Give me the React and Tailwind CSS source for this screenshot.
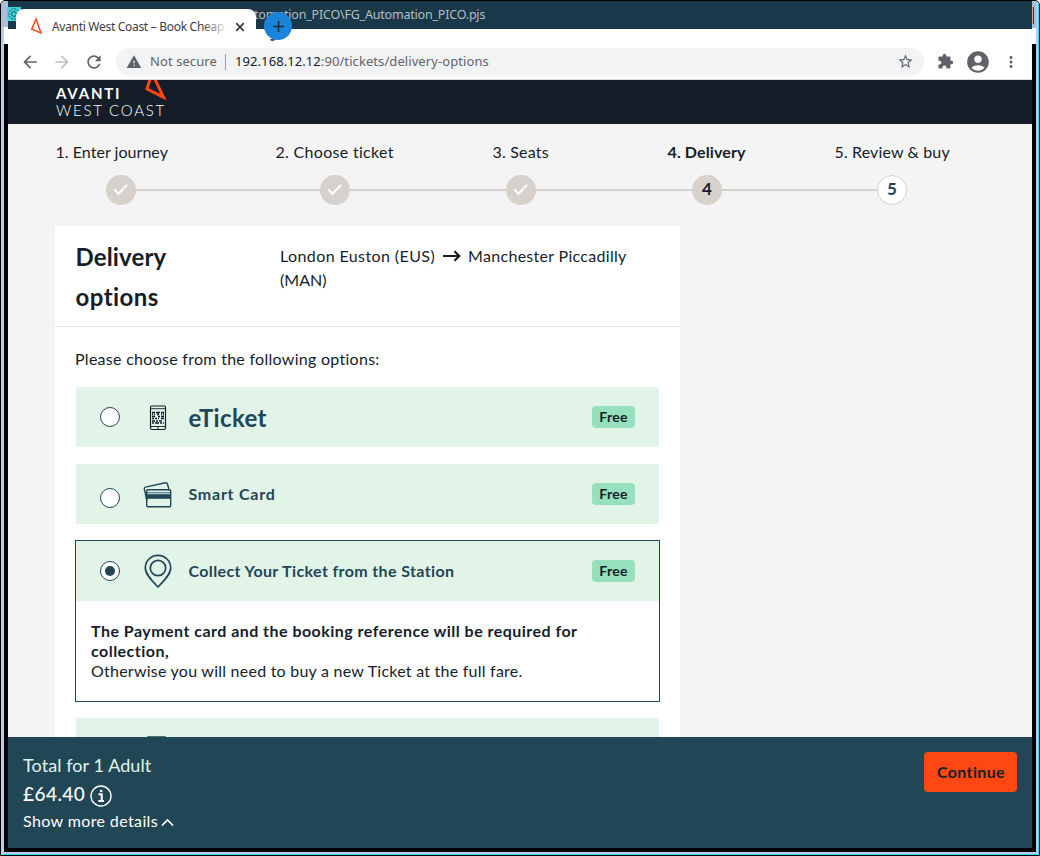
import React from "react";
import { MdArrowBack, MdArrowForward, MdRefresh, MdWarning, MdStarBorder, MdExtension, MdAccountCircle, MdMoreVert, MdAdd } from "react-icons/md";

const ui = "font-['Noto_Sans',sans-serif]";

function TitleBar() {
  return (
    <div className={`relative h-[43px] shrink-0 bg-white ${ui}`}>
      <div className="flex h-[28px] items-center bg-[#193849] pl-[246px] text-[12.5px] leading-none text-[#b4bfc6]">
        <span className="whitespace-nowrap tracking-[-0.2px]">tomation_PICO\FG_Automation_PICO.pjs</span>
      </div>
      <svg className="absolute left-[-1px] top-[6px]" width="14" height="15" viewBox="0 0 14 15" fill="none">
        <rect width="14" height="14" fill="#3cd5dc" />
        <circle cx="7" cy="7" r="5.2" stroke="#17535f" strokeDasharray="2 1" />
        <circle cx="7" cy="7" r="2.4" stroke="#17535f" />
      </svg>
      <div className="absolute left-[8px] top-[8px] flex h-[35px] w-[240px] items-center rounded-t-[8px] bg-white pl-[13px] pr-[11px]">
        <svg className="mt-[-2px] shrink-0" width="16" height="18" viewBox="0 0 16 18" fill="none" stroke="#ff4713" strokeWidth="1.5">
          <path d="M7 2L2.7 12.2L12 16Z" />
        </svg>
        <div className="relative ml-[7px] whitespace-nowrap text-[12px] leading-[18px] tracking-[-0.3px] text-[#3c4043]">
          Avanti West Coast – Book Cheap
          <div className="absolute inset-y-0 right-0 w-[22px] bg-linear-to-r from-transparent to-white/80" />
        </div>
        <svg className="ml-auto shrink-0" width="10" height="10" viewBox="0 0 10 10" stroke="#3c4043" strokeWidth="1.8">
          <path d="M1.2 1.2L8.8 8.8M8.8 1.2L1.2 8.8" />
        </svg>
      </div>
      <div className="absolute left-[256px] top-[11px] flex h-[28px] w-[28px] items-center justify-center rounded-full bg-[#1a83da] text-[#1d2c38]">
        <MdAdd className="h-[19px] w-[19px]" />
      </div>
      <div className="absolute left-[262px] top-[38px] h-[2px] w-[5px] rounded-b-full bg-[#44576a]" />
    </div>
  );
}

function Toolbar() {
  return (
    <div className={`flex h-[36px] shrink-0 items-center border-b border-[#dadce0] bg-white text-[#5f6368] ${ui}`}>
      <MdArrowBack className="ml-[12px] h-[20px] w-[20px]" />
      <MdArrowForward className="ml-[12px] h-[20px] w-[20px] text-[#bdc1c6]" />
      <MdRefresh className="ml-[12px] h-[20px] w-[20px]" />
      <div className="ml-[12px] flex h-[28px] w-[808px] items-center rounded-full bg-[#f1f3f4] pl-[10px] pr-[10px] text-[13px]">
        <MdWarning className="h-[16px] w-[16px]" />
        <span className="ml-[8px] w-[68px] whitespace-nowrap tracking-[0.08px]">Not secure</span>
        <span className="ml-[7px] h-[16px] w-px bg-[#9aa0a6]" />
        <span className="ml-[9px] whitespace-nowrap tracking-[0.08px]"><span className="text-[#202124]">192.168.12.12</span>:90/tickets/delivery-options</span>
        <MdStarBorder className="ml-auto h-[17px] w-[17px]" />
      </div>
      <MdExtension className="ml-[13px] h-[17px] w-[17px]" />
      <MdAccountCircle className="ml-[11px] h-[26px] w-[26px]" />
      <MdMoreVert className="ml-[11px] h-[18px] w-[18px]" />
    </div>
  );
}

function SiteHeader() {
  return (
    <header className="relative h-[44px] shrink-0 overflow-hidden bg-[#151e28] pl-[48px] pt-[5px] text-white">
      <div className="text-[15px] font-bold leading-[17px] tracking-[1.8px]">AVANTI</div>
      <div className="text-[15px] font-light leading-[16px] tracking-[1.75px]">WEST COAST</div>
      <svg className="absolute left-[136px] top-0" width="24" height="22" viewBox="0 0 24 22" fill="none" stroke="#ff4713" strokeWidth="3">
        <path d="M8 -7L3 9L19.5 17.2Z" />
      </svg>
    </header>
  );
}

function Check() {
  return (
    <svg width="16" height="14" viewBox="0 0 16 14" fill="none" stroke="#fff" strokeWidth="2">
      <path d="M1.5 6.5L5.5 10.8L14 2" />
    </svg>
  );
}

const line = "mt-[14px] h-[2px] bg-[#d6d1cb]";
const dot = "flex h-[30px] w-[30px] items-center justify-center rounded-full bg-[#d6d1cb] pb-[2px] text-[17px] font-bold";
const checkDot = "flex h-[30px] w-[30px] items-center justify-center rounded-full bg-[#d6d1cb]";

function Steps() {
  return (
    <div>
      <div className="flex h-[48px] items-center whitespace-nowrap pl-[47.5px] pt-[7px] text-[16px]">
        <span className="w-[220px] tracking-[0.04px]">1. Enter journey</span>
        <span className="w-[217px] tracking-[0.3px]">2. Choose ticket</span>
        <span className="w-[175px] tracking-[0.2px]">3. Seats</span>
        <span className="w-[167px] font-bold tracking-[0.13px]">4. Delivery</span>
        <span className="tracking-[0.13px]">5. Review &amp; buy</span>
      </div>
      <div className="flex pl-[98px] pt-[3px]">
        <div className={checkDot}><Check /></div>
        <div className={`w-[184px] ${line}`} />
        <div className={checkDot}><Check /></div>
        <div className={`w-[156px] ${line}`} />
        <div className={checkDot}><Check /></div>
        <div className={`w-[156px] ${line}`} />
        <div className={dot}>4</div>
        <div className={`w-[155px] ${line}`} />
        <div className="flex h-[30px] w-[30px] items-center justify-center rounded-full border border-[#d6d1cb] bg-white pb-[2px] text-[17px] font-bold text-[#214656]">5</div>
      </div>
    </div>
  );
}

function Phone() {
  return (
    <svg className="mt-px" width="18" height="26" viewBox="0 0 18 26" fill="none" stroke="#151e28">
      <rect x="1.5" y="1" width="15" height="23.5" rx="1.5" strokeWidth="1.2" />
      <path d="M1.5 3.7H16.5M1.5 21.5H16.5M8 23H10" strokeWidth="0.9" />
      <path d="M3 7.5H6M7 7.5H11M12 7.5H15M3 9.3H4M5 9.3H6M8 9.3H10M12 9.3H13M14 9.3H15M3 11.5H6M9 11.5H11M12 11.5H15M3 13.5H5M6 13.5H8M9 13.5H10M12 13.5H15M3 16H6M7 16H9M10 16H13M3 18H5M6 18H10M11 18H13M14 18H15" strokeWidth="1.7" />
    </svg>
  );
}

function Cards() {
  return (
    <svg className="mt-[2px]" width="30" height="28" viewBox="0 0 30 28" fill="none" stroke="#214656" strokeWidth="1.4">
      <path d="M4 20L1.3 7.8Q1 6.5 2.4 6.1L22.6 1.7Q24 1.4 24.4 2.7L25.9 8.3" />
      <rect x="3.7" y="8.7" width="24" height="17" rx="1.2" />
      <path d="M4 11.8H27" strokeWidth="0.9" />
      <path d="M2.7 15.5H28" strokeWidth="4.6" />
    </svg>
  );
}

function Pin() {
  return (
    <svg width="30" height="36" viewBox="0 0 30 36" fill="none" stroke="#214656" strokeWidth="1.7">
      <path d="M15 34C9.5 28.5 2.3 21.5 2.3 15A12.7 12.7 0 0 1 27.7 15C27.7 21.5 20.5 28.5 15 34Z" />
      <circle cx="15" cy="15" r="7.7" />
    </svg>
  );
}

function Option({ icon, label, labelClass, checked, radioClass, className }) {
  return (
    <div className={`flex h-[60px] items-center bg-[#e1f4e7] pr-[24px] ${className}`}>
      <span className={`ml-[24px] flex h-[20px] w-[20px] items-center justify-center rounded-full border border-[#214656] bg-white ${radioClass}`}>
        {checked && <span className="h-[10px] w-[10px] rounded-full bg-[#214656]" />}
      </span>
      <span className="ml-[23px] flex w-[30px] justify-center">{icon}</span>
      <span className={`ml-[15.5px] whitespace-nowrap font-bold text-[#214656] ${labelClass}`}>{label}</span>
      <span className="ml-auto flex h-[22px] w-[43px] items-center justify-center rounded-[4px] bg-[#96e0be] pb-[2px] text-[14px] font-bold tracking-[0.3px]">Free</span>
    </div>
  );
}

function DeliveryCard() {
  return (
    <main className="ml-[47px] mt-[21px] w-[625px] bg-white">
      <div className="flex h-[101px] border-b border-[#e4e4e4] pl-[20.5px] pt-[10px]">
        <h1 className="w-[204.5px] pt-px text-[24px] font-bold leading-[40px] tracking-[0.45px]"><span className="tracking-[0.15px]">Delivery</span><br />options</h1>
        <div className="pt-[8px] text-[16px] leading-[24px]">
          <div className="flex items-center whitespace-nowrap">
            <span className="tracking-[0.4px]">London Euston (EUS)</span>
            <svg className="ml-[8px] mr-[7px]" width="18" height="12" viewBox="0 0 18 12" fill="none" stroke="#151e28" strokeWidth="2.2">
              <path d="M0 6H16M11.5 1.3L16.3 6L11.5 10.7" />
            </svg>
            <span className="tracking-[0.3px]">Manchester Piccadilly</span>
          </div>
          <div>(MAN)</div>
        </div>
      </div>
      <p className="pl-[20px] pt-[20px] text-[16px] leading-[24px] tracking-[0.28px]">Please choose from the following options:</p>
      <div className="flex flex-col px-[20px] pt-[16px]">
        <Option className="mx-px rounded-t-[3px]" icon={<Phone />} label="eTicket" labelClass="pt-px text-[24px] tracking-[0.35px]" />
        <Option className="mx-px mt-[17px]" icon={<Cards />} label="Smart Card" labelClass="text-[16px] tracking-[0.75px]" radioClass="mt-[8px]" />
        <div className="mt-[16px] h-[162px] border border-[#214656]">
          <Option icon={<Pin />} label="Collect Your Ticket from the Station" labelClass="text-[16px] tracking-[0.37px]" checked />
          <div className="whitespace-nowrap pl-[15px] pt-[20px] text-[16px] leading-[20px]">
            <div className="font-bold tracking-[0.47px]">The Payment card and the booking reference will be required for<br />collection,</div>
            <div className="tracking-[0.24px]">Otherwise you will need to buy a new Ticket at the full fare.</div>
          </div>
        </div>
        <div className="mx-px mt-[16px] h-[60px] bg-[#e1f4e7] pl-[71px] pt-[18px]">
          <div className="h-[24px] w-[19px] rounded-[1px] bg-[#4b6d78]" />
        </div>
      </div>
    </main>
  );
}

function TotalBar() {
  return (
    <footer className="flex h-[111px] shrink-0 justify-between bg-[#214656] pl-[15px] pr-[15px] pt-[15px] text-white">
      <div className="whitespace-nowrap">
        <div className="text-[18px] leading-[27px] tracking-[0.08px] text-[#e1f4e7]">Total for 1 Adult</div>
        <div className="flex h-[31px] items-center gap-[5px] text-[19px] font-medium">
          <span className="tracking-[0.45px]">£64.40</span>
          <svg className="mt-[3px]" width="22" height="22" viewBox="0 0 22 22" fill="none" stroke="currentColor" strokeWidth="1.4">
            <circle cx="11" cy="11" r="10" />
            <path d="M8.5 9.3H11.7V16M8.3 16H14" strokeWidth="2" />
            <path d="M10 6H12.3" strokeWidth="2.2" />
          </svg>
        </div>
        <div className="-mt-px flex items-center gap-[3px] text-[16px] leading-[23px]">
          <span className="tracking-[0.38px]">Show more details</span>
          <svg className="mt-[4px]" width="13" height="9" viewBox="0 0 13 9" fill="none" stroke="currentColor" strokeWidth="1.7">
            <path d="M1 7.5L6.5 2L12 7.5" />
          </svg>
        </div>
      </div>
      <button className="h-[40px] w-[93px] rounded-[4px] bg-[#ff4713] pl-px text-[16px] font-bold tracking-[0.35px] text-[#151e28]">Continue</button>
    </footer>
  );
}

export default function App() {
  return (
    <div className="flex h-[856px] w-[1040px] flex-col overflow-hidden rounded-t-[5px] border border-black bg-[#b9cde8] font-[Lato,sans-serif] text-[#151e28]">
      <div className="flex h-[854px] border-b border-r border-[#35d8f0] pb-[2px]">
        <div className="flex w-[7px] flex-col">
          <div className="h-[26px] bg-[#a9bedb]" />
          <div className="ml-[3px] h-[17px] bg-white" />
          <div className="ml-[3px] flex-1 bg-black" />
        </div>
        <div className="flex w-[1024px] flex-col bg-[#f4f4f4]">
          <TitleBar />
          <Toolbar />
          <SiteHeader />
          <div className="h-[613px] overflow-hidden">
            <Steps />
            <DeliveryCard />
          </div>
          <TotalBar />
          <div className="h-[4px] bg-black" />
        </div>
        <div className="flex w-[4px] flex-col">
          <div className="h-[27px] bg-[#a9bedb] pt-[6px]">
            <div className="h-[17px] w-[2px] border-r border-[#5a2830] bg-[#d9a394]" />
          </div>
          <div className="h-[16px] bg-white" />
          <div className="flex-1 bg-black" />
        </div>
      </div>
    </div>
  );
}
